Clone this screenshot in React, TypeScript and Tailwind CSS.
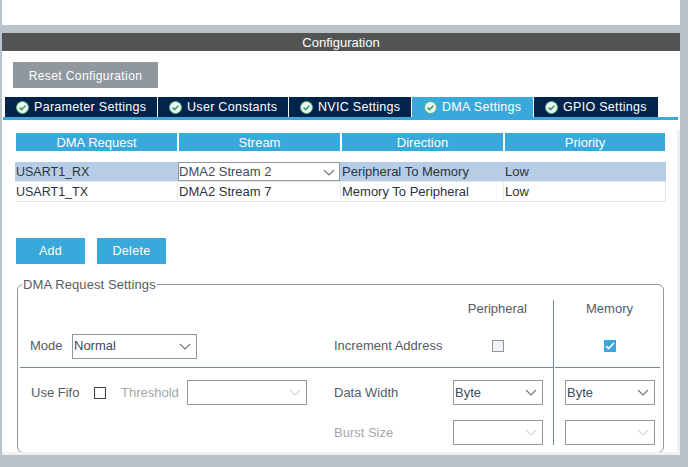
import React from 'react';

const font = "font-['Liberation_Sans',Arial,sans-serif]";

const Chevron = ({ light }: { light?: boolean }) => (
  <svg width="12" height="7" viewBox="0 0 12 7" fill="none" className="shrink-0">
    <path d="M1 1l5 5 5-5" stroke={light ? '#d4d6d8' : '#6f7478'} strokeWidth="1.1" />
  </svg>
);

const TabIcon = () => (
  <svg width="13" height="13" viewBox="0 0 13 13" className="shrink-0">
    <circle cx="6.5" cy="6.5" r="6" fill="#eef6f0" stroke="#4fb07a" strokeWidth="1" />
    <path d="M3.6 6.6l2 2 3.8-3.8" fill="none" stroke="#3f9e6a" strokeWidth="1.6" />
  </svg>
);

const Select = ({ value, width, light }: { value?: string; width: string; light?: boolean }) => (
  <div className={`h-[25px] ${width} border border-[#90989e] bg-white flex items-center justify-between pl-[1px] pr-[5px] text-[13px] text-[#3f4a5a]`}>
    <span>{value}</span>
    <Chevron light={light} />
  </div>
);

const tabs = [
  { label: 'Parameter Settings', w: 'w-[152px]', pad: 'pl-[11px]' },
  { label: 'User Constants', w: 'w-[130px]', pad: 'pl-[11px]' },
  { label: 'NVIC Settings', w: 'w-[122px]', pad: 'pl-[11px]' },
  { label: 'DMA Settings', w: 'w-[121px]', pad: 'pl-[12px]', active: true },
  { label: 'GPIO Settings', w: 'w-[124px]', pad: 'pl-[11px]' },
];

export default function App() {
  return (
    <div className={`w-[699px] h-[467px] bg-white flex overflow-hidden ${font}`}>
      <div className="w-[688px] h-full bg-[#b8c3ca] pl-[2px] pr-[8px] flex flex-col">
        <div className="h-[25px] bg-white shrink-0" />
        <div className="mt-[8px] h-[18px] shrink-0 bg-[#525453] text-white text-[13px] pt-[1px] flex items-center justify-center">
          Configuration
        </div>

        <div className="h-[404px] shrink-0 bg-white flex flex-col">
          <button className="mt-[11px] ml-[11px] w-[145px] h-[26px] bg-[#90989e] text-white text-[12px] tracking-[0.4px] pt-[1px] flex items-center justify-center shrink-0">
            Reset Configuration
          </button>

          {/* Tabs */}
          <div className="mt-[9px] ml-[1px] w-[675px] border-b-[3px] border-[#39a9dc] flex pl-[2px] gap-[1px] shrink-0">
            {tabs.map((t) => (
              <div
                key={t.label}
                className={`${t.w} ${t.pad} h-[20px] flex items-center gap-[5px] text-[12.5px] tracking-[0.3px] text-white ${t.active ? 'bg-[#39a9dc]' : 'bg-[#03234b]'}`}
              >
                <TabIcon />
                {t.label}
              </div>
            ))}
          </div>

          <div className="flex-1 flex min-h-0">
            <div className="w-[675px] pl-[13px]">
              {/* DMA table */}
              <div className="mt-[13px] ml-[1px] flex gap-[2px] text-[13px] text-white">
                {['DMA Request', 'Stream', 'Direction', 'Priority'].map((h, i) => (
                  <div key={h} className={`${i === 3 ? 'w-[160px]' : 'w-[161px]'} h-[18px] pt-[1px] bg-[#39a9dc] flex items-center justify-center`}>
                    {h}
                  </div>
                ))}
              </div>
              <div className="mt-[11px] w-[651px] text-[13px] text-[#2d3440]">
                <div className="flex h-[20px] bg-[#b7cde5] border-b border-[#e6e8ea]">
                  <div className="w-[163px] pl-[1px] pt-[1px] flex items-center text-[12.5px]">USART1_RX</div>
                  <div className="w-[163px] pr-[1px]">
                    <div className="h-[19px] border border-[#90989e] bg-white flex items-center justify-between pr-[4px] pt-[1px] text-[#3f4a5a]">
                      <span>DMA2 Stream 2</span>
                      <Chevron />
                    </div>
                  </div>
                  <div className="w-[163px] pl-[1px] pt-[1px] flex items-center">Peripheral To Memory</div>
                  <div className="flex-1 pl-[1px] pt-[1px] flex items-center">Low</div>
                </div>
                <div className="flex h-[20px] bg-white border-b border-[#e6e8ea] border-r">
                  <div className="w-[163px] pl-[1px] pt-[1px] flex items-center border-r border-[#e6e8ea] text-[12.5px]">USART1_TX</div>
                  <div className="w-[163px] pl-[1px] pt-[1px] flex items-center border-r border-[#e6e8ea]">DMA2 Stream 7</div>
                  <div className="w-[163px] pl-[1px] pt-[1px] flex items-center border-r border-[#e6e8ea]">Memory To Peripheral</div>
                  <div className="flex-1 pl-[1px] pt-[1px] flex items-center">Low</div>
                </div>
              </div>

              <div className="mt-[36px] ml-[1px] flex gap-[12px]">
                <button className="w-[69px] h-[26px] pt-[1px] bg-[#39a9dc] text-white text-[12.5px] tracking-[0.3px]">Add</button>
                <button className="w-[69px] h-[26px] pt-[1px] bg-[#39a9dc] text-white text-[12.5px] tracking-[0.3px]">Delete</button>
              </div>

              {/* DMA Request Settings */}
              <fieldset className="mt-[13px] ml-[2px] w-[647px] h-[176px] border border-[#90989e] rounded-[6px] pl-0 pr-0 pb-0 pt-0 min-w-0">
                <legend className="ml-[4px] px-[1px] text-[13px] leading-[15px] text-[#555c66] tracking-[0.1px]">DMA Request Settings</legend>
                <div className="flex mt-[8px]">
                  <div className="w-[536px] border-r border-[#6a86c0] h-[145px] flex flex-col pl-[2px]">
                    <div className="h-[68px] border-b border-[#6a86c0] flex flex-col">
                      <div className="h-[18px] flex justify-end items-end pr-[26px] text-[13px] text-[#555c66]">Peripheral</div>
                      <div className="flex-1 flex items-center text-[13px] text-[#555c66] pt-[7px]">
                        <span className="ml-[10px] w-[42px]">Mode</span>
                        <Select value="Normal" width="w-[125px]" />
                        <span className="ml-[137px] w-[158px]">Increment Address</span>
                        <span className="w-[12px] h-[12px] border border-[#90989e] bg-[#f2f3f4]" />
                      </div>
                    </div>
                    <div className="flex mt-[12px] text-[13px]">
                      <div className="flex items-center h-[25px]">
                        <span className="ml-[11px] w-[63px] text-[#555c66]">Use Fifo</span>
                        <span className="w-[12px] h-[12px] border border-[#3c3f44] bg-white" />
                        <span className="ml-[15px] w-[66px] text-[#a2a7ac]">Threshold</span>
                        <Select width="w-[120px]" light />
                      </div>
                      <div className="ml-[27px] w-[119px] flex flex-col gap-[15px]">
                        <div className="h-[25px] flex items-center text-[#555c66]">Data Width</div>
                        <div className="h-[25px] flex items-center text-[#a2a7ac]">Burst Size</div>
                      </div>
                      <div className="flex flex-col gap-[15px]">
                        <Select value="Byte" width="w-[90px]" />
                        <Select width="w-[90px]" light />
                      </div>
                    </div>
                  </div>
                  <div className="flex-1 flex flex-col pl-[1px]">
                    <div className="h-[68px] w-[105px] pl-[4px] border-b border-[#6a86c0] flex flex-col items-center">
                      <div className="h-[18px] flex items-end text-[13px] text-[#555c66]">Memory</div>
                      <div className="flex-1 flex items-center pt-[7px]">
                        <span className="w-[12px] h-[12px] bg-[#39a9dc] flex items-center justify-center">
                          <svg width="10" height="8" viewBox="0 0 10 8" fill="none">
                            <path d="M1 4l2.5 2.5L9 1" stroke="#fff" strokeWidth="1.6" />
                          </svg>
                        </span>
                      </div>
                    </div>
                    <div className="mt-[12px] ml-[10px] flex flex-col gap-[15px]">
                      <Select value="Byte" width="w-[90px]" />
                      <Select width="w-[90px]" light />
                    </div>
                  </div>
                </div>
              </fieldset>
            </div>
            <div className="w-[3px] bg-[#f0f0f0] mt-[10px]" />
          </div>
          <div className="h-[3px] bg-[#f0f0f0] shrink-0" />
        </div>
      </div>
    </div>
  );
}
